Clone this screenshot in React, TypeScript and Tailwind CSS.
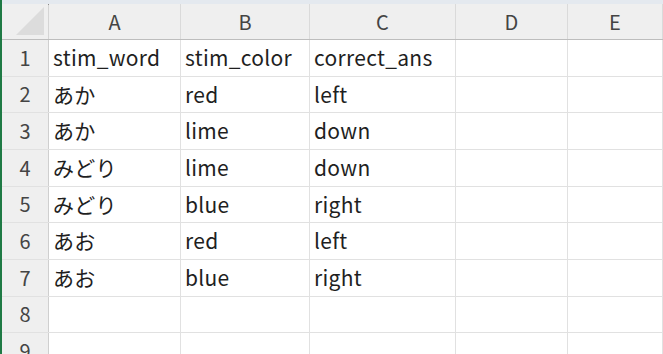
import React from "react"

const cols = [
  { key: "A", w: "w-[132px]" },
  { key: "B", w: "w-[129px]" },
  { key: "C", w: "w-[146px]" },
  { key: "D", w: "w-[112px]" },
  { key: "E", w: "flex-1" },
]

const rows = [
  ["stim_word", "stim_color", "correct_ans"],
  ["あか", "red", "left"],
  ["あか", "lime", "down"],
  ["みどり", "lime", "down"],
  ["みどり", "blue", "right"],
  ["あお", "red", "left"],
  ["あお", "blue", "right"],
  [],
  [],
]

const font = { fontFamily: '"Noto Sans CJK JP", "Noto Sans", sans-serif' }

export default function App() {
  return (
    <div className="w-[663px] h-[354px] overflow-hidden bg-white flex" style={font}>
      {/* green frame edge */}
      <div className="w-[2px] h-full bg-[#1f7a45] shrink-0" />

      <div className="flex-1 flex flex-col overflow-hidden">
        <div className="h-[4px] shrink-0 bg-[#e4e9ef]" />

        {/* column headers */}
        <div className="flex h-[36px] shrink-0 bg-[#efefef] border-b border-[#bdbdbd]">
          <div className="w-[47px] border-r border-[#d4d4d4] relative">
            <div className="absolute right-[4px] bottom-[4px] w-0 h-0 border-l-[28px] border-l-transparent border-b-[28px] border-b-[#dcdcdc]" />
            <div className="absolute right-[-1px] top-0 w-[1px] h-[1px] bg-[#8a8a8a]" />
          </div>
          {cols.map((c) => (
            <div
              key={c.key}
              className={`${c.w} border-r border-[#dadada] flex items-center justify-center text-[20px] text-[#444444]`}
            >
              {c.key}
            </div>
          ))}
        </div>

        {/* body */}
        {rows.map((r, i) => (
          <div key={i} className="flex h-[36.67px] shrink-0 border-b border-[#e1e1e1]">
            <div className="w-[47px] bg-[#efefef] border-r border-[#cfcfcf] flex items-center justify-center text-[20px] text-[#444444]">
              {i + 1}
            </div>
            {cols.map((c, j) => (
              <div
                key={c.key}
                className={`${c.w} border-r border-[#e1e1e1] flex items-center pl-[4px] text-[21px] tracking-[0.3px] text-[#1f1f1f] whitespace-nowrap overflow-hidden`}
              >
                {r[j] ?? ""}
              </div>
            ))}
          </div>
        ))}
      </div>
    </div>
  )
}
